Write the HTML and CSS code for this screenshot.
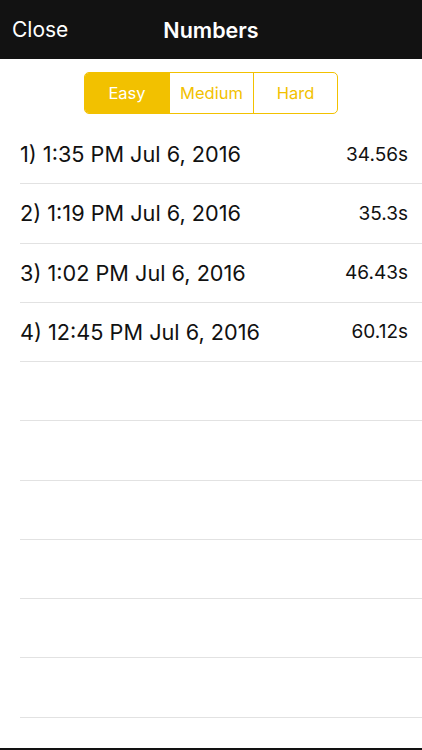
FILE: index.html
```html
<!DOCTYPE html>
<html>
<head>
<meta charset="UTF-8">
<title>Numbers</title>
<link rel="stylesheet" href="styles.css">
</head>
<body>
<div class="page">
	<div class="navbar">
		<span class="nav-close">Close</span>
		<span class="nav-title">Numbers</span>
	</div>

	<div class="segments">
		<span class="seg active">Easy</span>
		<span class="seg">Medium</span>
		<span class="seg">Hard</span>
	</div>

	<ul class="scores">
		<li><span class="when">1) 1:35 PM Jul 6, 2016</span><span class="time">34.56s</span></li>
		<li><span class="when">2) 1:19 PM Jul 6, 2016</span><span class="time">35.3s</span></li>
		<li><span class="when">3) 1:02 PM Jul 6, 2016</span><span class="time">46.43s</span></li>
		<li><span class="when">4) 12:45 PM Jul 6, 2016</span><span class="time">60.12s</span></li>
		<li></li>
		<li></li>
		<li></li>
		<li></li>
		<li></li>
		<li></li>
	</ul>

	<div class="bottom"></div>
</div>
</body>
</html>
```

FILE: styles.css
```css
html, body {
    margin: 0;
    padding: 0;
    background: white;
}
body {
    font-family: Inter, "Liberation Sans", sans-serif;
    color: #111;
}
.page {
    height: 750px;
    display: flex;
    flex-direction: column;
    overflow: hidden;
}
.navbar {
    height: 59px;
    flex: none;
    background: #121212;
    color: white;
    display: flex;
    align-items: center;
    justify-content: center;
    position: relative;
}
.nav-close {
    position: absolute;
    left: 12px;
    top: 17px;
    font-size: 21px;
}
.nav-title {
    font-size: 21.5px;
    font-weight: 600;
    margin-top: 1px;
}
.segments {
    display: flex;
    flex: none;
    align-self: center;
    margin-top: 13px;
    margin-bottom: 11px;
    border: 1px solid #f2c100;
    border-radius: 5px;
    overflow: hidden;
}
.seg {
    width: 83px;
    height: 40px;
    display: flex;
    align-items: center;
    justify-content: center;
    font-size: 16.5px;
    color: #f2c100;
    border-left: 1px solid #f2c100;
}
.seg:first-child {
    border-left: none;
    width: 84px;
}
.seg.active {
    background: #f2c100;
    color: white;
}
.scores {
    list-style: none;
    margin: 0;
    padding: 0 0 0 20px;
    flex: 1;
}
.scores li {
    height: 58.25px;
    border-bottom: 1px solid #e2e2e2;
    display: flex;
    align-items: center;
    justify-content: space-between;
    padding-right: 14px;
}
.when {
    font-size: 21.7px;
}
.time {
    font-size: 19px;
}
.bottom {
    height: 2px;
    flex: none;
    background: #121212;
}
```
